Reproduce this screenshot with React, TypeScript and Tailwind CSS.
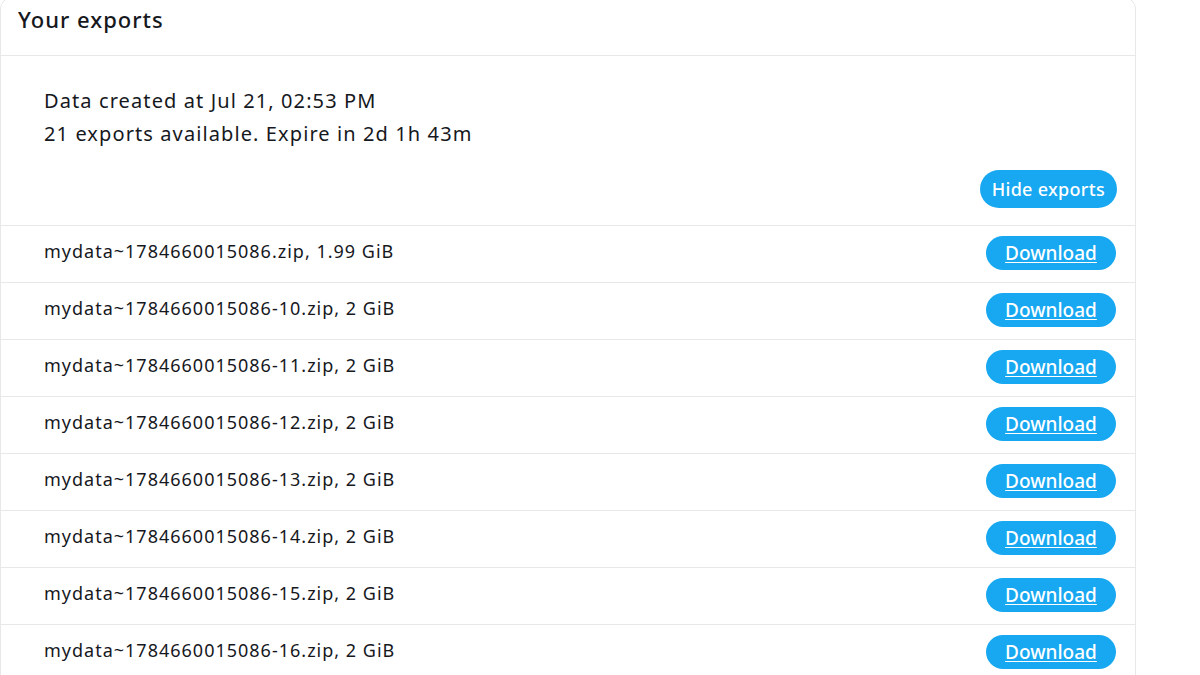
import React from "react";

const files = [
  "mydata~1784660015086.zip, 1.99 GiB",
  "mydata~1784660015086-10.zip, 2 GiB",
  "mydata~1784660015086-11.zip, 2 GiB",
  "mydata~1784660015086-12.zip, 2 GiB",
  "mydata~1784660015086-13.zip, 2 GiB",
  "mydata~1784660015086-14.zip, 2 GiB",
  "mydata~1784660015086-15.zip, 2 GiB",
  "mydata~1784660015086-16.zip, 2 GiB",
];

const App = () => {
  return (
    <div className="h-[675px] overflow-hidden bg-white font-['Noto_Sans','Lato',sans-serif] text-[#16181d]">
      <div className="-mt-[3px] w-[1136px] rounded-t-xl border border-[#e8e8e8] bg-white">
        <div className="h-[58px] border-b border-[#e8e8e8] pl-[17px] pt-[6px]">
          <h2 className="text-[22px] leading-[30px] font-medium tracking-[1px]">Your exports</h2>
        </div>

        <div className="flex flex-col pl-[43px] pr-[18px] pt-[28px] pb-[17px]">
          <p className="text-[20px] leading-[33px] tracking-[1.1px]">Data created at Jul 21, 02:53 PM</p>
          <p className="text-[20px] leading-[33px] tracking-[1.1px]">21 exports available. Expire in 2d 1h 43m</p>
          <div className="mt-[20px] flex justify-end">
            <button className="h-[38px] rounded-full bg-[#17a8f1] px-[12px] text-[18px] font-medium tracking-[0.3px] text-white">
              Hide exports
            </button>
          </div>
        </div>

        {files.map((name) => (
          <div
            key={name}
            className="flex h-[57px] items-center justify-between border-t border-[#e8e8e8] pl-[43px] pr-[19px] pb-[6px]"
          >
            <span className="text-[18px] tracking-[1px]">{name}</span>
            <button className="mt-[4px] h-[34px] w-[130px] rounded-full bg-[#17a8f1] text-[19px] font-medium text-white underline underline-offset-2">
              Download
            </button>
          </div>
        ))}
      </div>
    </div>
  );
};

export default App;
